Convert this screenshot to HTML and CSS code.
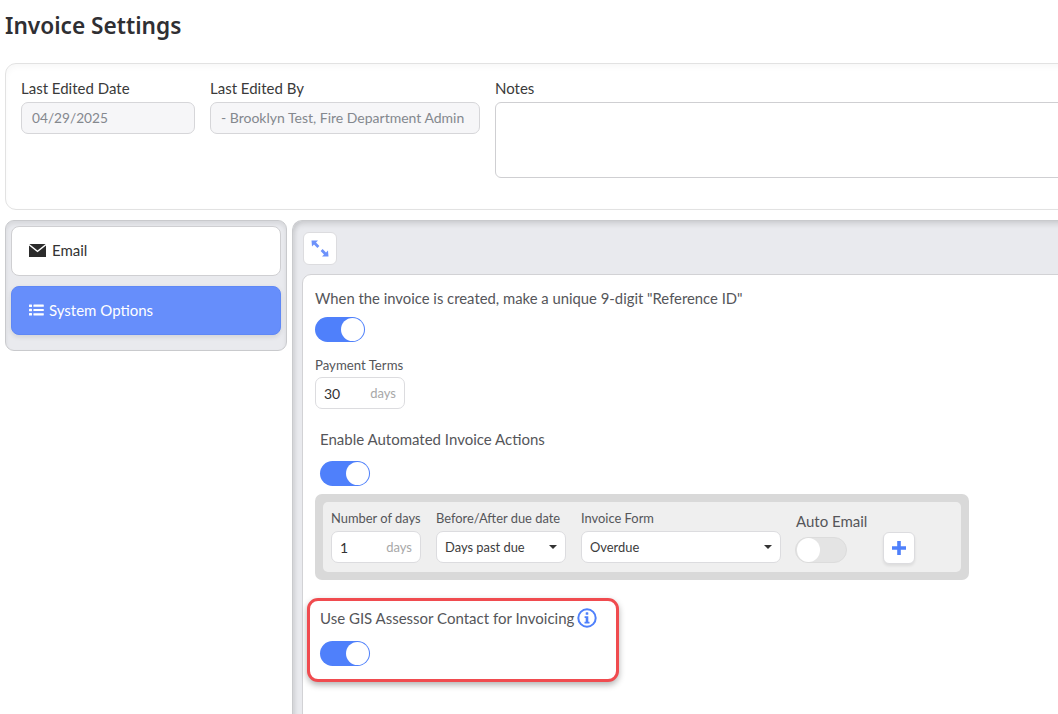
FILE: index.html
```html
<!DOCTYPE html>
<html lang="en">
<head>
<meta charset="utf-8">
<title>Invoice Settings</title>
<link rel="stylesheet" href="styles.css">
</head>
<body>
<div class="page">
  <h1 class="title">Invoice Settings</h1>
  <section class="meta-card">
    <div class="field date-field">
      <label class="meta-label">Last Edited Date</label>
      <div class="ro-input date-value">04/29/2025</div>
    </div>
    <div class="field by-field">
      <label class="meta-label">Last Edited By</label>
      <div class="ro-input">- Brooklyn Test, Fire Department Admin</div>
    </div>
    <div class="field notes-field">
      <label class="meta-label">Notes</label>
      <div class="notes-box"></div>
    </div>
  </section>
  <div class="lower">
    <nav class="sidebar">
      <a class="tab">
        <svg class="tab-icon-mail" viewBox="0 0 17 13" width="17" height="13"><path fill="#2b2b2b" d="M0.4 0h16.2L8.5 6.4z"/><path fill="#2b2b2b" d="M0 1.4l8.5 6.8 8.5-6.8V13H0z"/></svg>
        <span>Email</span>
      </a>
      <a class="tab tab-active">
        <svg class="tab-icon-list" viewBox="0 0 15 12" width="15" height="12"><g fill="#fff"><rect x="0" y="0.5" width="3" height="2.4" rx=".5"/><rect x="0" y="4.8" width="3" height="2.4" rx=".5"/><rect x="0" y="9.1" width="3" height="2.4" rx=".5"/><rect x="4.4" y="0.6" width="10.4" height="2.2" rx=".4"/><rect x="4.4" y="4.9" width="10.4" height="2.2" rx=".4"/><rect x="4.4" y="9.2" width="10.4" height="2.2" rx=".4"/></g></svg>
        <span>System Options</span>
      </a>
    </nav>
    <main class="panel">
      <button class="icon-btn expand-btn" type="button" aria-label="Expand">
        <svg viewBox="0 0 18 17" width="18" height="17"><g fill="#6d92fb"><path d="M0.5 0.5h6.5L5 2.5l3.4 3.4-2 2L3 4.5 1 6.6z"/><path d="M17.5 16.5H11l2-2-3.4-3.4 2-2 3.4 3.4 2-2.1z"/></g></svg>
      </button>
      <div class="content-card">
        <p class="opt-label first-label">When the invoice is created, make a unique 9-digit "Reference ID"</p>
        <span class="switch on"></span>
        <p class="small-label terms-label">Payment Terms</p>
        <div class="unit-input terms-input"><span class="val">30</span><span class="unit">days</span></div>

        <div class="indented">
          <p class="opt-label actions-label">Enable Automated Invoice Actions</p>
          <span class="switch on"></span>
        </div>

        <div class="action-outer">
          <div class="action-inner">
            <div class="act-col col-days">
              <p class="small-label">Number of days</p>
              <div class="unit-input days-input"><span class="val">1</span><span class="unit">days</span></div>
            </div>
            <div class="act-col col-when">
              <p class="small-label">Before/After due date</p>
              <div class="select when-select"><span>Days past due</span><i class="caret"></i></div>
            </div>
            <div class="act-col col-form">
              <p class="small-label">Invoice Form</p>
              <div class="select form-select"><span>Overdue</span><i class="caret"></i></div>
            </div>
            <div class="act-col col-auto">
              <p class="auto-label">Auto Email</p>
              <span class="switch off"></span>
            </div>
            <button class="icon-btn plus-btn" type="button" aria-label="Add">
              <svg viewBox="0 0 14 14" width="14" height="14"><path fill="#4f80fb" d="M5.2 0h3.6v5.2H14v3.6H8.8V14H5.2V8.8H0V5.2h5.2z"/></svg>
            </button>
          </div>
        </div>

        <div class="highlight">
          <p class="opt-label gis-label">Use GIS Assessor Contact for Invoicing
            <svg class="info" viewBox="0 0 20 20" width="20" height="20"><circle cx="10" cy="10" r="8.7" fill="#fff" stroke="#4f80fb" stroke-width="2"/><rect x="8.7" y="4.2" width="2.6" height="2.6" rx=".6" fill="#4f80fb"/><path fill="#4f80fb" d="M7.6 8.3h3.7v5.5h1.2v1.8H7.5v-1.8h1.2v-3.7h-1.1z"/></svg>
          </p>
          <span class="switch on"></span>
        </div>
      </div>
    </main>
  </div>
</div>
</body>
</html>
```
FILE: styles.css
```css
* { box-sizing: border-box; }
html, body { margin: 0; padding: 0; height: 714px; overflow: hidden; background: #fff; }
body { font-family: "Lato", "Liberation Sans", sans-serif; color: #333; }
.page { width: 1300px; padding-left: 5px; }
p { margin: 0; }

.title { margin: 0; height: 63px; padding-top: 10px; font-family: "Noto Sans", "Open Sans", sans-serif; font-size: 22.65px; line-height: 32px; font-weight: 600; color: #2f2f33; }

.meta-card { display: flex; height: 147px; padding: 15px 15px 0; border: 1px solid #e2e2e2; border-radius: 11px; box-shadow: inset 0 3px 6px rgba(0,0,0,.03); background: #fff; }
.field { display: flex; flex-direction: column; flex: none; }
.date-field { width: 174px; margin-right: 15px; }
.by-field { width: 270px; margin-right: 15px; }
.notes-field { width: 700px; }
.meta-label { font-size: 15px; line-height: 18px; height: 23px; color: #3a3a3a; }
.ro-input { height: 32px; padding: 0 10px; border: 1px solid #d6d6d9; border-radius: 7px; background: #f6f6f8; color: #84888e; font-size: 14px; line-height: 30px; white-space: nowrap; }
.date-value { font-size: 13.7px; }
.notes-box { height: 76px; border: 1px solid #cfcfd2; border-radius: 6px; background: #fff; }

.lower { display: flex; align-items: flex-start; gap: 5px; margin-top: 10px; }
.sidebar { width: 282px; height: 131px; padding: 5px 5px 0; background: #e9eaee; border: 1px solid #c9cacd; border-radius: 9px; box-shadow: inset 0 3px 4px rgba(0,0,0,.08); display: flex; flex-direction: column; gap: 10px; }
.tab { display: flex; align-items: center; height: 50px; padding: 0 0 2px 17px; border: 1px solid #cfcfd2; border-radius: 8px; background: #fff; font-size: 15px; color: #333; }
.tab-icon-mail { margin-right: 6px; }
.tab-active { height: 49px; background: #668efb; border-color: #5f88f6; color: #fff; box-shadow: 0 2px 5px rgba(0,0,0,.1); }
.tab-icon-list { margin-right: 5px; }

.panel { width: 1000px; height: 520px; padding: 11px 10px 0; background: #e9eaee; border: 1px solid #c9cacd; border-right: 0; border-bottom: 0; border-radius: 10px 0 0 0; box-shadow: inset 0 4px 5px rgba(0,0,0,.09), inset 3px 0 4px rgba(0,0,0,.06); }
.icon-btn { display: flex; align-items: center; justify-content: center; padding: 0; background: #fff; border: 1px solid #dcdcdf; border-radius: 6px; }
.expand-btn { width: 34px; height: 33px; }

.content-card { height: 500px; margin-top: 9px; margin-left: -1px; padding: 14px 12px 0; background: #fff; border: 1px solid #d2d2d5; border-radius: 9px 0 0 0; }
.opt-label { font-size: 15px; line-height: 18px; color: #55565a; }
.first-label { height: 28px; font-size: 14.83px; }
.switch { position: relative; display: block; width: 50px; height: 25px; border-radius: 13px; }
.switch.on { background: #4f80fb; }
.switch.on::after { content: ""; position: absolute; right: 1px; top: 1px; width: 23px; height: 23px; border-radius: 50%; background: #fff; }
.switch.off { width: 52px; height: 26px; margin-left: -1px; background: #e4e4e4; border: 1px solid #dcdcdc; border-radius: 14px; }
.switch.off::after { content: ""; position: absolute; left: 1px; top: 0; width: 23px; height: 24px; border-radius: 50%; background: #fff; }

.small-label { font-size: 12.9px; line-height: 16px; color: #55565a; white-space: nowrap; }
.terms-label { margin-top: 15px; height: 20px; font-size: 13.2px; }
.unit-input { display: flex; justify-content: space-between; align-items: center; height: 32px; padding: 0 8px; border: 1px solid #dcdcdf; border-radius: 7px; background: #fff; font-size: 14px; color: #333; }
.unit { color: #a8a8a8; font-size: 13px; }
.terms-input { width: 90px; }
.indented { padding-left: 5px; margin-top: 21px; }
.actions-label { height: 31px; }

.action-outer { width: 654px; height: 86px; margin-top: 8px; padding: 8px; background: #d9d9d9; border-radius: 7px; }
.action-inner { display: flex; align-items: flex-start; height: 70px; padding: 8px 8px 0; background: #efefef; border-radius: 5px; }
.act-col { display: flex; flex-direction: column; }
.act-col .small-label { height: 21px; }
.col-days { width: 90px; margin-right: 15px; }
.col-when { width: 130px; margin-right: 15px; }
.col-form { width: 200px; margin-right: 15px; }
.col-auto { width: 87px; }
.days-input { width: 90px; }
.select { display: flex; justify-content: space-between; align-items: center; height: 32px; padding: 0 8px; border: 1px solid #dcdcdf; border-radius: 7px; background: #fff; font-size: 12.9px; color: #3c3c3c; }
.caret { width: 0; height: 0; border-left: 4px solid transparent; border-right: 4px solid transparent; border-top: 4px solid #333; }
.auto-label { font-size: 15px; line-height: 18px; height: 25px; margin-top: 2px; color: #55565a; white-space: nowrap; }
.plus-btn { width: 32px; height: 32px; margin-top: 22px; box-shadow: 0 2px 3px rgba(0,0,0,.08); }

.highlight { width: 312px; height: 84px; margin-top: 18px; margin-left: -8px; padding: 6px 10px 0; border: 3px solid #f04b4f; border-radius: 11px; box-shadow: 0 3px 6px rgba(0,0,0,.3); background: #fff; }
.gis-label { display: flex; align-items: center; gap: 3px; height: 22px; margin-bottom: 12px; white-space: nowrap; }
.info { flex: none; }
```
